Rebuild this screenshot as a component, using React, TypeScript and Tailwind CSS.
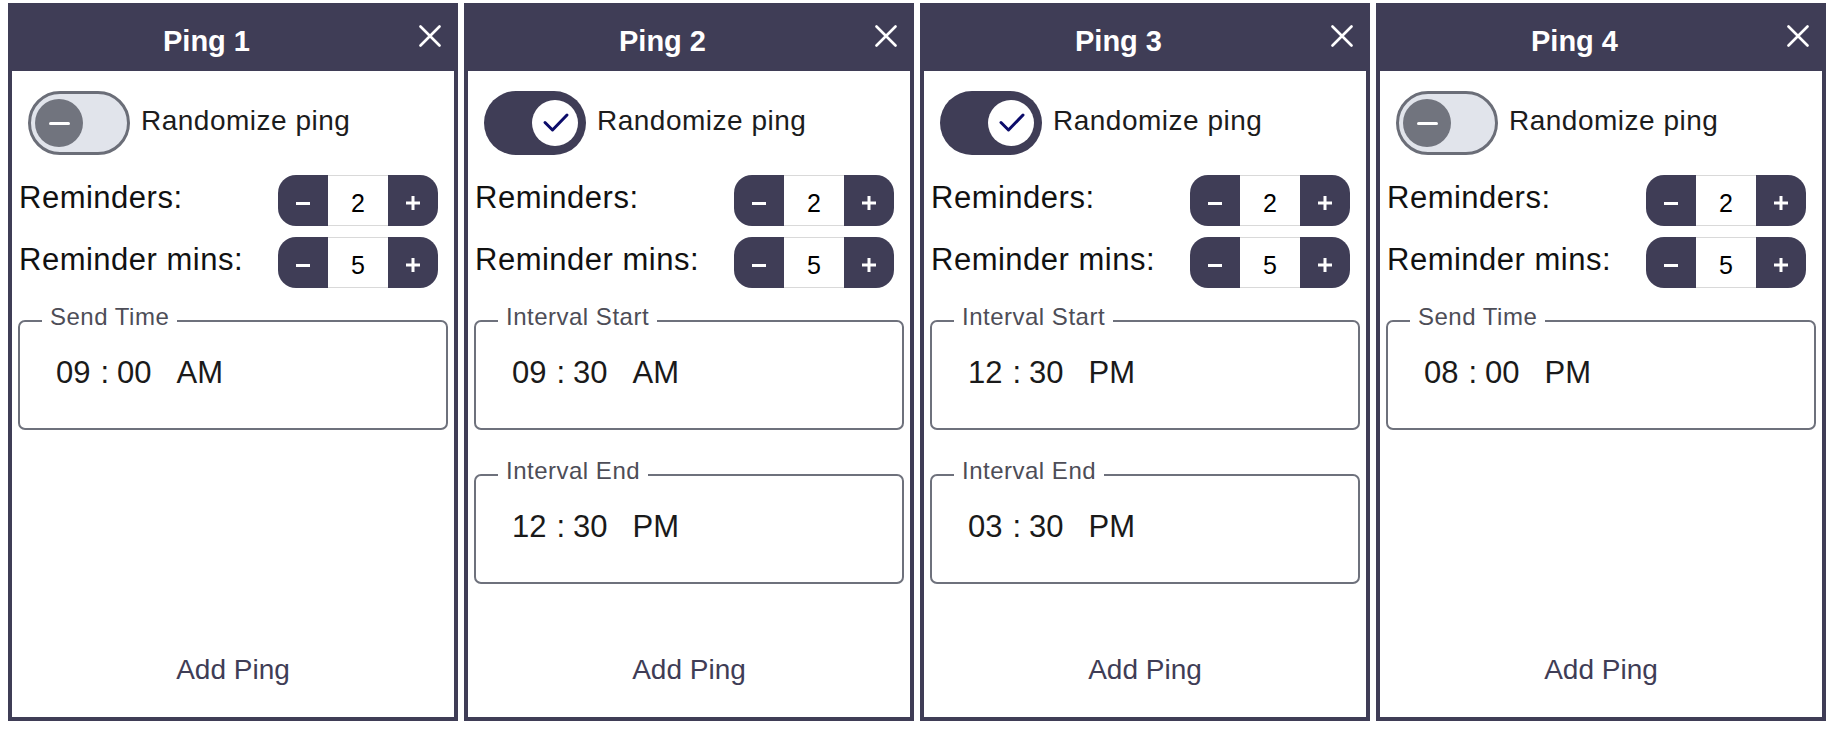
import React from "react";

type PingData = {
  title: string;
  on: boolean;
  times: { label: string; h: string; m: string; ap: string }[];
};

const pings: PingData[] = [
  { title: "Ping 1", on: false, times: [{ label: "Send Time", h: "09", m: "00", ap: "AM" }] },
  {
    title: "Ping 2",
    on: true,
    times: [
      { label: "Interval Start", h: "09", m: "30", ap: "AM" },
      { label: "Interval End", h: "12", m: "30", ap: "PM" },
    ],
  },
  {
    title: "Ping 3",
    on: true,
    times: [
      { label: "Interval Start", h: "12", m: "30", ap: "PM" },
      { label: "Interval End", h: "03", m: "30", ap: "PM" },
    ],
  },
  { title: "Ping 4", on: false, times: [{ label: "Send Time", h: "08", m: "00", ap: "PM" }] },
];

function Toggle({ on }: { on: boolean }) {
  if (on) {
    return (
      <div className="flex h-[64px] w-[102px] shrink-0 items-center justify-end rounded-full bg-[#3f3d56] pr-[8px]">
        <div className="flex h-[46px] w-[46px] items-center justify-center rounded-full bg-white">
          <svg width="46" height="46" viewBox="0 0 46 46">
            <path
              d="M13 22.5 L20.5 30 L35 15"
              stroke="#0c0c6a"
              strokeWidth="3"
              fill="none"
              strokeLinecap="round"
              strokeLinejoin="round"
            />
          </svg>
        </div>
      </div>
    );
  }
  return (
    <div className="flex h-[64px] w-[102px] shrink-0 items-center rounded-full border-[3px] border-[#6b6e78] bg-[#e1e4eb] pl-[4px]">
      <div className="flex h-[48px] w-[48px] items-center justify-center rounded-full bg-[#71747e]">
        <div className="h-[3px] w-[21px] rounded-full bg-white" />
      </div>
    </div>
  );
}

function Stepper({ value }: { value: string }) {
  return (
    <div className="mr-[10px] flex h-[51px] w-[160px] shrink-0">
      <div className="flex w-[50px] items-center justify-center rounded-l-[18px] bg-[#3f3d56] pt-[5px]">
        <div className="h-[3px] w-[14px] bg-white" />
      </div>
      <div className="flex w-[60px] items-center justify-center border-y border-[#d9d9d9] bg-white pt-[5px] text-[25px] leading-[28px] text-black">
        {value}
      </div>
      <div className="flex w-[50px] items-center justify-center rounded-r-[18px] bg-[#3f3d56] pt-[5px]">
        <svg width="14" height="14" viewBox="0 0 14 14">
          <path d="M7 0 V14 M0 7 H14" stroke="white" strokeWidth="3" />
        </svg>
      </div>
    </div>
  );
}

function TimeBox({
  label,
  h,
  m,
  ap,
  first,
}: {
  label: string;
  h: string;
  m: string;
  ap: string;
  first: boolean;
}) {
  return (
    <fieldset
      className={`${first ? "mt-[17px]" : "mt-[29px]"} h-[125px] rounded-[7px] border-2 border-[#6e717c]`}
    >
      <legend className="ml-[22px] px-[8px] pb-[8px] text-[24px] leading-[24px] tracking-[0.5px] text-[#4d4d57]">
        {label}
      </legend>
      <div className="flex items-baseline pl-[36px] pt-[18px] text-[31px] leading-[36px] text-[#1a1a1a]">
        <span>{h}</span>
        <span className="ml-[10px]">:</span>
        <span className="ml-[8px]">{m}</span>
        <span className="ml-[25px]">{ap}</span>
      </div>
    </fieldset>
  );
}

function Panel({ p }: { p: PingData }) {
  return (
    <div className="flex h-[718px] w-[450px] shrink-0 flex-col border-4 border-[#3f3d56] bg-white">
      <div className="flex h-[64px] shrink-0 items-start bg-[#3f3d56]">
        <div className="flex-1 pt-[18px] text-center text-[29px] font-bold leading-[33px] text-white">
          {p.title}
        </div>
        <div className="flex w-[53px] justify-end pr-[13px] pt-[18px]">
          <svg width="22" height="22" viewBox="0 0 22 22">
            <path d="M1.5 1.5 L20.5 20.5 M20.5 1.5 L1.5 20.5" stroke="white" strokeWidth="2.6" strokeLinecap="round" />
          </svg>
        </div>
      </div>
      <div className="flex flex-1 flex-col px-[6px]">
        <div className="ml-[10px] mt-[20px] flex h-[64px] items-center gap-[11px]">
          <Toggle on={p.on} />
          <span className="mb-[4px] text-[28px] leading-[32px] tracking-[0.5px] text-[#1c1c1c]">
            Randomize ping
          </span>
        </div>
        <div className="mt-[20px] flex h-[51px] items-center justify-between">
          <span className="mb-[6px] pl-[1px] text-[31px] leading-[34px] tracking-[0.5px] text-[#111]">
            Reminders:
          </span>
          <Stepper value="2" />
        </div>
        <div className="mt-[11px] flex h-[51px] items-center justify-between">
          <span className="mb-[6px] pl-[1px] text-[31px] leading-[34px] tracking-[0.5px] text-[#111]">
            Reminder mins:
          </span>
          <Stepper value="5" />
        </div>
        {p.times.map((t, i) => (
          <TimeBox key={t.label} {...t} first={i === 0} />
        ))}
        <div className="mb-[31px] mt-auto text-center text-[28px] leading-[32px] text-[#3f3d56]">
          Add Ping
        </div>
      </div>
    </div>
  );
}

export default function App() {
  return (
    <div className="flex h-[730px] w-[1840px] gap-[6px] bg-white pl-[8px] pt-[3px] font-[family-name:'Liberation_Sans',Arial,sans-serif]">
      {pings.map((p) => (
        <Panel key={p.title} p={p} />
      ))}
    </div>
  );
}
